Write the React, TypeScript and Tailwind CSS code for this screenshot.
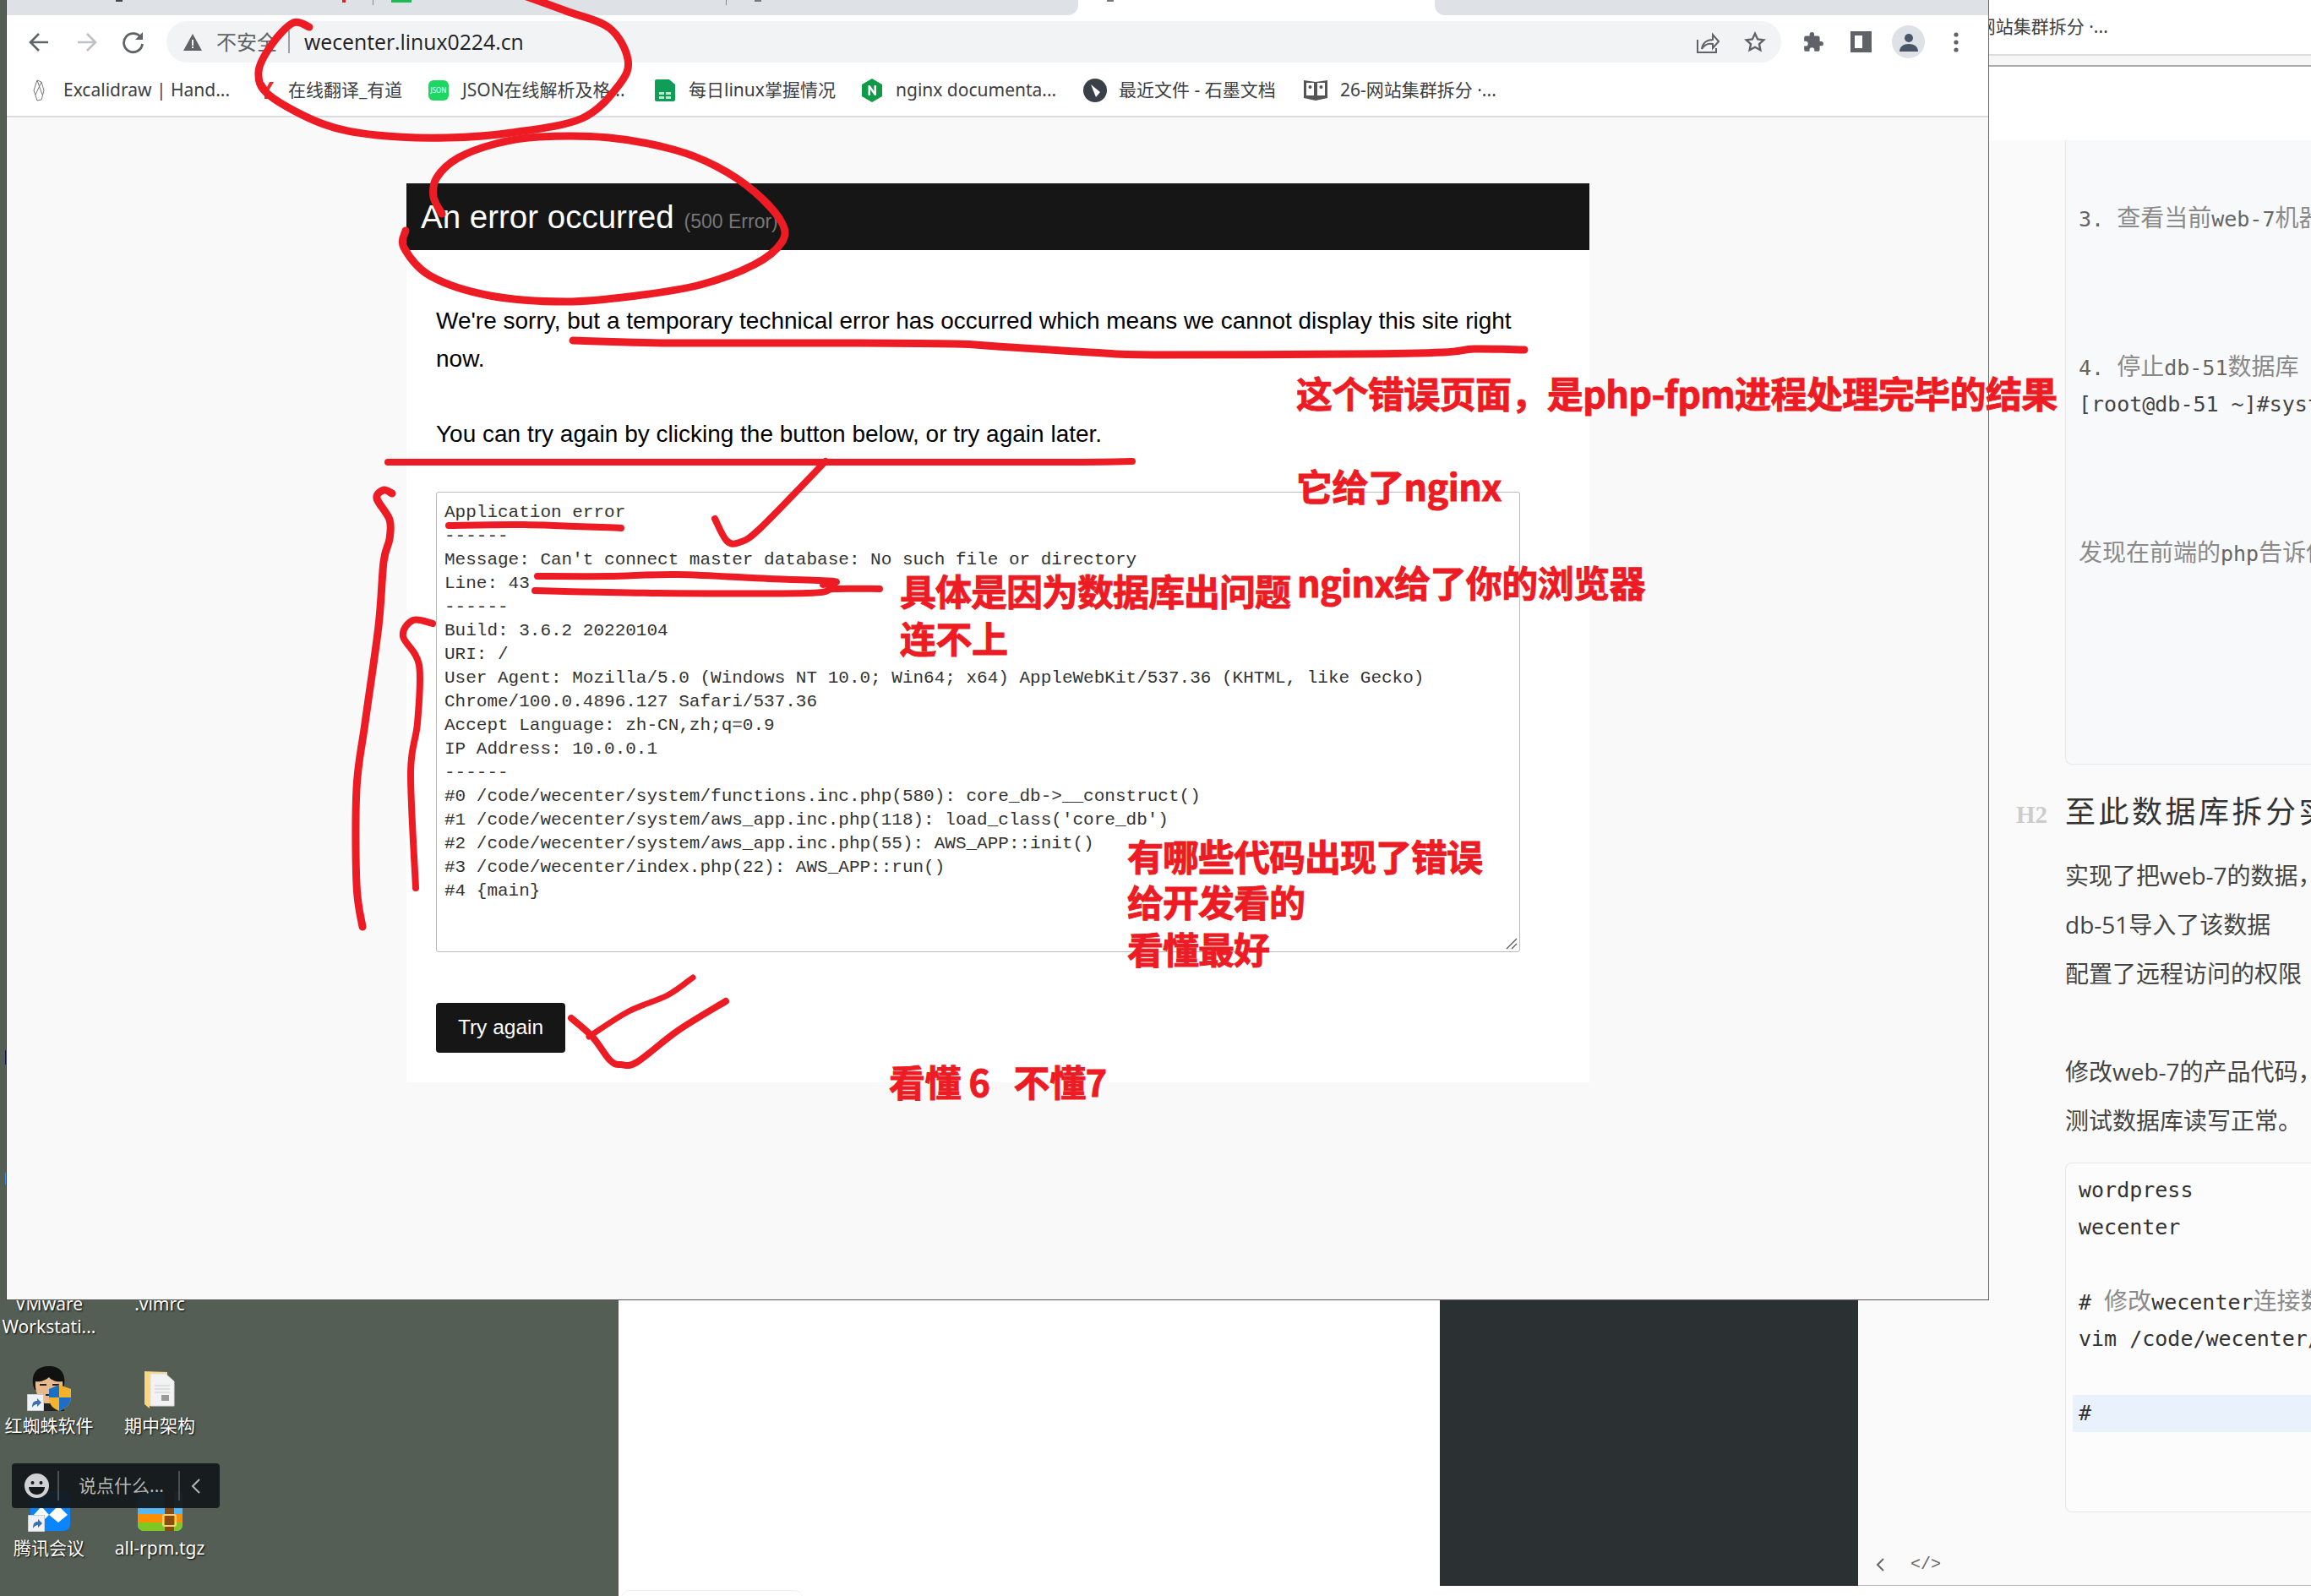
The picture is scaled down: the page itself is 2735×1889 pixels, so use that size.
import React from "react";

const SANS = "font-['Noto_Sans','Noto_Sans_CJK_SC',sans-serif]";

type P = [number, number];
function smooth(p: P[]) {
  let d = `M${p[0][0]} ${p[0][1]}`;
  for (let i = 0; i < p.length - 1; i++) {
    const a = p[Math.max(i - 1, 0)], b = p[i], c = p[i + 1], e = p[Math.min(i + 2, p.length - 1)];
    const c1x = b[0] + (c[0] - a[0]) / 6, c1y = b[1] + (c[1] - a[1]) / 6;
    const c2x = c[0] - (e[0] - b[0]) / 6, c2y = c[1] - (e[1] - b[1]) / 6;
    d += ` C${c1x} ${c1y} ${c2x} ${c2y} ${c[0]} ${c[1]}`;
  }
  return d;
}

const strokes: { p: P[]; w: number }[] = [
  { w: 9, p: [[366, 32], [347, 27], [322, 52], [306, 85], [319, 113], [383, 147], [446, 160], [529, 163], [606, 157], [689, 140], [733, 100], [743, 70], [721, 33], [670, 13], [612, -8]] },
  { w: 9, p: [[523, 253], [513, 233], [517, 210], [542, 187], [587, 170], [638, 162], [721, 163], [797, 177], [848, 197], [893, 227], [925, 263], [925, 287], [893, 313], [829, 337], [753, 350], [670, 357], [580, 350], [510, 327], [478, 293], [480, 273]] },
  { w: 9, p: [[678, 403], [800, 406], [1000, 406], [1130, 407], [1180, 410], [1290, 417], [1365, 420], [1600, 419], [1708, 417], [1745, 413], [1804, 414]] },
  { w: 8, p: [[459, 547], [800, 547], [1240, 547], [1340, 546]] },
  { w: 8, p: [[846, 614], [860, 640], [875, 642], [900, 625], [977, 546]] },
  { w: 9, p: [[464, 584], [454, 580], [446, 590], [461, 615], [461, 638], [454, 665], [448, 741], [432, 856], [422, 933], [422, 1047], [429, 1097]] },
  { w: 8, p: [[512, 738], [489, 734], [477, 753], [496, 787], [494, 856], [486, 914], [492, 1051]] },
  { w: 8, p: [[531, 622], [620, 621], [735, 625]] },
  { w: 8, p: [[636, 682], [720, 682], [802, 680], [910, 685], [987, 688], [974, 692]] },
  { w: 8, p: [[633, 699], [780, 702], [955, 702], [987, 697], [1041, 697]] },
  { w: 8, p: [[676, 1205], [701, 1227], [722, 1255], [735, 1260], [754, 1257], [802, 1220], [859, 1185]] },
  { w: 7, p: [[697, 1227], [744, 1197], [790, 1178], [820, 1157]] },
];

const Notes = () => (
  <div className="absolute left-0 top-0 w-[2735px] h-[1889px] pointer-events-none font-['Noto_Sans_CJK_SC','Noto_Sans',sans-serif] font-bold text-[#ed1c24] text-[43px] leading-[50px] whitespace-pre tracking-[-0.5px] [-webkit-text-stroke:1px_#ed1c24]">
    <svg className="absolute left-0 top-0" width="2735" height="1889" viewBox="0 0 2735 1889" fill="none">
      {strokes.map((s, i) => (
        <path key={i} d={smooth(s.p)} stroke="#ed1c24" strokeWidth={s.w} strokeLinecap="round" strokeLinejoin="round" />
      ))}
    </svg>
    <div className="absolute left-[1534px] top-[439px] tracking-[-0.6px]">这个错误页面，是php-fpm进程处理完毕的结果</div>
    <div className="absolute left-[1534px] top-[549px]">它给了nginx</div>
    <div className="absolute left-[1065px] top-[673px] tracking-[-1px]">具体是因为数据库出问题</div>
    <div className="absolute left-[1535px] top-[663px] tracking-[-0.6px]">nginx给了你的浏览器</div>
    <div className="absolute left-[1065px] top-[729px]">连不上</div>
    <div className="absolute left-[1334px] top-[987px] tracking-[-1px]">有哪些代码出现了错误</div>
    <div className="absolute left-[1334px] top-[1041px] tracking-[-1px]">给开发看的</div>
    <div className="absolute left-[1334px] top-[1097px] tracking-[-1px]">看懂最好</div>
    <div className="absolute left-[1052px] top-[1254px] tracking-[-0.4px]">看懂 6   不懂7</div>
  </div>
);

const Toolbar = () => (
  <div className="h-[62px] bg-white flex items-start pt-[7px]">
    <div className="w-[189px] h-[49px] relative shrink-0 flex items-center">
      <svg className="ml-[24px]" width="28" height="28" viewBox="0 0 28 28" fill="none" stroke="#5f6368" strokeWidth="2.6"><path d="M25 14H4M14 4L4 14l10 10" /></svg>
      <svg className="ml-[29px]" width="28" height="28" viewBox="0 0 28 28" fill="none" stroke="#bdc1c6" strokeWidth="2.6"><path d="M3 14h21M14 4l10 10-10 10" /></svg>
      <svg className="ml-[27px]" width="28" height="28" viewBox="0 0 28 28" fill="none" stroke="#5f6368" strokeWidth="2.8"><path d="M23 9a11 11 0 1 0 1.5 7" /><path d="M25 2v9h-9z" fill="#5f6368" stroke="none" /></svg>
    </div>
    <div className="w-[1911px] h-[49px] bg-[#f1f3f4] rounded-full shrink-0 flex items-center pl-[20px]">
      <svg width="22" height="20" viewBox="0 0 22 20"><path d="M11 0l11 20H0z" fill="#5f6368" /><path d="M10 7h2v7h-2zM10 15h2v2h-2z" fill="#f1f3f4" /></svg>
      <span className="ml-[17px] text-[24px] text-[#5f6368]">不安全</span>
      <span className="ml-[13px] w-[2px] h-[27px] bg-[#9aa0a6]" />
      <span className="ml-[17px] text-[24.8px] text-[#202124] font-['Open_Sans','Noto_Sans',sans-serif]">wecenter.linux0224.cn</span>
      <svg className="ml-auto" width="28" height="26" viewBox="0 0 28 26" fill="none" stroke="#5f6368" strokeWidth="2"><path d="M2 10v15h22v-5" /><path d="M7 21c1-7 6-11 13-11V4l7 8-7 8v-5c-5-1-10 1-13 6z" /></svg>
      <svg className="ml-[29px] mr-[18px]" width="26" height="26" viewBox="0 0 24 24" fill="none" stroke="#5f6368" strokeWidth="2.2"><path d="M12 2.5l2.9 6.2 6.6.8-4.9 4.5 1.3 6.6-5.9-3.3-5.9 3.3 1.3-6.6L2.5 9.5l6.6-.8z" /></svg>
    </div>
    <div className="flex items-center h-[49px] flex-1">
      <svg className="ml-[25px]" width="26" height="26" viewBox="0 0 24 24" fill="#5f6368"><path d="M20.5 11H19V7a2 2 0 0 0-2-2h-4V3.5a2.5 2.5 0 0 0-5 0V5H4a2 2 0 0 0-2 2v3.8h1.5a2.7 2.7 0 0 1 0 5.4H2V20a2 2 0 0 0 2 2h3.8v-1.5a2.7 2.7 0 0 1 5.4 0V22H17a2 2 0 0 0 2-2v-4h1.5a2.5 2.5 0 0 0 0-5z" /></svg>
      <div className="ml-[31px] w-[25px] h-[25px] border-[5px] border-r-[11px] border-[#5f6368] bg-white" />
      <div className="ml-[24px] w-[39px] h-[39px] rounded-full bg-[#dee1e6] flex items-center justify-center">
        <svg width="24" height="24" viewBox="0 0 24 24" fill="#4a5568"><circle cx="12" cy="7" r="5" /><path d="M1 23c0-6 5-9 11-9s11 3 11 9z" /></svg>
      </div>
      <svg className="ml-[34px]" width="6" height="24" viewBox="0 0 6 24" fill="#5f6368"><circle cx="3" cy="3" r="2.6" /><circle cx="3" cy="12" r="2.6" /><circle cx="3" cy="21" r="2.6" /></svg>
    </div>
  </div>
);

const Bookmark = ({ w, icon, text }: { w: string; icon: React.ReactNode; text: string }) => (
  <div className={`flex items-center shrink-0 ${w}`}>
    <div className="w-[36px] h-[30px] shrink-0 flex items-center">{icon}</div>
    <span className="text-[21px] text-[#3c4043] whitespace-nowrap">{text}</span>
  </div>
);

const Bookmarks = () => (
  <div className="h-[57px] pb-[3px] bg-white flex items-center pl-[31px]">
    <Bookmark w="w-[266px]" text="Excalidraw | Hand..." icon={
      <svg width="14" height="26" viewBox="0 0 14 26" fill="none" stroke="#777" strokeWidth="1"><path d="M5 1l5 2 3 10-3 11-5 1-4-12zM5 1l6 17M10 3L3 18" /></svg>} />
    <Bookmark w="w-[206px]" text="在线翻译_有道" icon={
      <svg width="20" height="24" viewBox="0 0 20 24" fill="#ed2b2b"><path d="M2 2h5l4 6 3-6h5l-7 12v8H8v-8z" /></svg>} />
    <Bookmark w="w-[268px]" text="JSON在线解析及格..." icon={
      <div className="-ml-[4px] w-[24px] h-[24px] rounded-[6px] bg-[#1ed760] flex items-center justify-center text-[8px] text-white">JSON</div>} />
    <Bookmark w="w-[245px]" text="每日linux掌握情况" icon={
      <svg className="-ml-[4px]" width="24" height="26" viewBox="0 0 24 26"><path d="M2 0h15l7 6v18a2 2 0 0 1-2 2H2a2 2 0 0 1-2-2V2a2 2 0 0 1 2-2z" fill="#0f9d58" /><path d="M5 15h6v3H5zM13 15h6v3h-6zM5 20h6v3H5zM13 20h6v3h-6z" fill="#bfe8d0" /></svg>} />
    <Bookmark w="w-[264px]" text="nginx documenta..." icon={
      <svg className="-ml-[4px]" width="24" height="28" viewBox="0 0 24 28"><path d="M12 0l12 7v14l-12 7-12-7V7z" fill="#0f9a47" /><path d="M7.5 20V8h2l5 7V8h2.5v12h-2l-5-7v7z" fill="#fff" /></svg>} />
    <Bookmark w="w-[262px]" text="最近文件 - 石墨文档" icon={
      <svg className="-ml-[6px]" width="28" height="28" viewBox="0 0 28 28"><circle cx="14" cy="14" r="14" fill="#3a4047" /><path d="M9 7l11 9-5 6z" fill="#fff" /></svg>} />
    <Bookmark w="w-[230px]" text="26-网站集群拆分 ·..." icon={
      <svg className="-ml-[7px]" width="28" height="26" viewBox="0 0 28 26"><path d="M0 1l14 2 14-2v21l-14 3-14-3z" fill="#555" /><rect x="3" y="4" width="9" height="15" fill="#fff" /><rect x="16" y="4" width="9" height="15" fill="#fff" /><circle cx="7.5" cy="9" r="2" fill="#555" /><circle cx="20.5" cy="9" r="2" fill="#555" /></svg>} />
  </div>
);

const log = `Application error
------
Message: Can't connect master database: No such file or directory
Line: 43
------
Build: 3.6.2 20220104
URI: /
User Agent: Mozilla/5.0 (Windows NT 10.0; Win64; x64) AppleWebKit/537.36 (KHTML, like Gecko)
Chrome/100.0.4896.127 Safari/537.36
Accept Language: zh-CN,zh;q=0.9
IP Address: 10.0.0.1
------
#0 /code/wecenter/system/functions.inc.php(580): core_db->__construct()
#1 /code/wecenter/system/aws_app.inc.php(118): load_class('core_db')
#2 /code/wecenter/system/aws_app.inc.php(55): AWS_APP::init()
#3 /code/wecenter/index.php(22): AWS_APP::run()
#4 {main}`;

const ErrorPage = () => (
  <div className="flex-1 bg-[#f9f9f9] pt-[78px] pl-[473px] font-['Liberation_Sans',sans-serif]">
    <div className="w-[1400px] bg-white">
      <div className="h-[79px] bg-[#161616] pl-[17px] flex items-baseline pt-[16px]">
        <span className="text-[38.5px] leading-[48px] text-white">An error occurred</span>
        <span className="ml-[12px] text-[23px] text-[#777]">(500 Error)</span>
      </div>
      <div className="pl-[35px] pt-[62px] pb-[35px]">
        <p className="text-[28px] leading-[44.7px] text-black w-[1300px]">
          We're sorry, but a temporary technical error has occurred which means we cannot display this site right now.
          <br /><br />
          You can try again by clicking the button below, or try again later.
        </p>
        <div className="relative mt-[45px] w-[1283px] h-[545px] border border-[#bbb] rounded-[3px] pl-[9px] pt-[10px] font-['Liberation_Mono',monospace] text-[21px] leading-[28px] text-[#333] whitespace-pre overflow-hidden">
          {log}
          <svg className="absolute right-[2px] bottom-[2px]" width="14" height="14" viewBox="0 0 14 14" stroke="#555" strokeWidth="1.2"><path d="M13 1L1 13M13 7l-6 6" /></svg>
        </div>
        <div className="mt-[60px] w-[153px] h-[59px] bg-[#161616] rounded-[4px] text-white text-[24.5px] flex items-center justify-center">Try again</div>
      </div>
    </div>
  </div>
);

const Browser = () => (
  <div className={`absolute left-[7px] top-0 w-[2347px] h-[1539px] bg-white flex flex-col border-l border-r border-b border-l-[#3a3f3a] border-r-[#666] border-b-[#555] ${SANS}`}>
    <div className="relative h-[18px] flex shrink-0">
      <div className="w-[1268px] bg-[#dee1e6] rounded-br-[12px]" />
      <div className="w-[422px] bg-white" />
      <div className="flex-1 bg-[#dee1e6] rounded-bl-[12px]" />
      <div className="absolute left-[129px] top-0 w-[8px] h-[2px] bg-[#444]" />
      <div className="absolute left-[397px] top-0 w-[4px] h-[3px] bg-[#e02020]" />
      <div className="absolute left-[433px] top-0 w-[1px] h-[6px] bg-[#888]" />
      <div className="absolute left-[455px] top-0 w-[24px] h-[3px] bg-[#1db954]" />
      <div className="absolute left-[851px] top-0 w-[1px] h-[6px] bg-[#888]" />
      <div className="absolute left-[885px] top-0 w-[8px] h-[2px] bg-[#777]" />
      <div className="absolute left-[1302px] top-0 w-[8px] h-[2px] bg-[#777]" />
    </div>
    <Toolbar />
    <Bookmarks />
    <div className="h-[2px] bg-[#dadce0] shrink-0" />
    <ErrorPage />
  </div>
);

const Label = ({ children }: { children: React.ReactNode }) => (
  <div className="text-center text-white text-[21px] leading-[27px] [text-shadow:1px_1px_2px_#000] whitespace-pre">{children}</div>
);

const Shortcut = () => (
  <svg className="absolute left-0 bottom-0" width="20" height="20" viewBox="0 0 20 20"><rect width="20" height="20" fill="#eef1f5" stroke="#aaa" /><path d="M6 16c0-6 2-8 6-8V5l5 5-5 5v-3c-2 0-4 1-6 4z" fill="#3a6fb0" /></svg>
);

const Desktop = () => (
  <aside className={`w-[732px] h-[1889px] shrink-0 bg-[#545e54] pt-[1530px] ${SANS}`}>
    <div className="grid grid-cols-[116px_146px] grid-rows-[87px_148px_auto]">
      <Label>{"VMware\nWorkstati..."}</Label>
      <Label>.vimrc</Label>
      <div className="flex flex-col items-center">
        <div className="relative w-[52px] h-[53px]">
          <svg width="52" height="53" viewBox="0 0 52 53">
            <path d="M7 22C5 6 14 0 26 0s20 7 18 22l-2 6H9z" fill="#111" />
            <path d="M10 18c5 1 12-1 16-5 3 4 9 6 16 5 1 12-3 25-16 27C14 44 9 30 10 18z" fill="#e9b98c" />
            <path d="M15 22h8M30 22h8M22 34h10" stroke="#222" strokeWidth="2" />
            <path d="M8 53c1-7 8-9 18-9s18 2 18 9z" fill="#222" />
            <path d="M38 22l14 5v10c0 8-6 13-14 16-8-3-12-8-12-16V27z" fill="#f5b32c" />
            <path d="M38 22v15H26v-10zM38 37h14c0 8-6 13-14 16z" fill="#1c6fc4" />
          </svg>
          <Shortcut />
        </div>
        <div className="mt-[4px]"><Label>红蜘蛛软件</Label></div>
      </div>
      <div className="flex flex-col items-center">
        <svg className="mt-[5px]" width="36" height="45" viewBox="0 0 36 45">
          <path d="M0 1l27 1v40H6l0 3-6-5z" fill="#f8d77e" />
          <path d="M7 4h18l10 9v29H7z" fill="#f2f2f2" stroke="#ddd" />
          <path d="M12 18h18M12 22h18M12 26h18" stroke="#ccc" />
          <rect x="20" y="29" width="9" height="7" fill="#999" />
        </svg>
        <div className="mt-[7px]"><Label>期中架构</Label></div>
      </div>
      <div className="flex flex-col items-center">
        <div className="relative w-[50px] h-[48px]">
          <svg className="absolute right-0 top-0" width="47" height="47" viewBox="0 0 47 47">
            <rect width="47" height="47" rx="8" fill="#0a84ff" />
            <path d="M4 28l9-10 9 10 11-11 11 11-11 9-11-9-9 9z" fill="#fff" />
          </svg>
          <Shortcut />
        </div>
        <div className="mt-[6px]"><Label>腾讯会议</Label></div>
      </div>
      <div className="flex flex-col items-center">
        <svg width="53" height="47" viewBox="0 0 53 47">
          <rect width="53" height="47" rx="7" fill="#54b8f5" />
          <path d="M0 27h53v10H0z" fill="#ff8f00" />
          <path d="M0 37h53v3a7 7 0 0 1-7 7H7a7 7 0 0 1-7-7z" fill="#7fc823" />
          <rect x="32" y="0" width="11" height="47" fill="#8a4b10" />
          <rect x="30" y="28" width="15" height="13" fill="none" stroke="#ffd27a" strokeWidth="2" rx="2" />
        </svg>
        <div className="mt-[7px]"><Label>all-rpm.tgz</Label></div>
      </div>
    </div>
  </aside>
);

const ChatBar = () => (
  <div className={`absolute left-[14px] top-[1732px] w-[246px] h-[53px] bg-[#14191c]/95 rounded-[4px] flex items-center ${SANS}`}>
    <svg className="ml-[15px]" width="29" height="29" viewBox="0 0 29 29"><circle cx="14.5" cy="14.5" r="14.5" fill="#cfd1d2" /><circle cx="9.5" cy="11" r="2" fill="#14191c" /><circle cx="19.5" cy="11" r="2" fill="#14191c" /><path d="M5 16h19c0 5-4 9-9.5 9S5 21 5 16z" fill="#14191c" /></svg>
    <span className="ml-[10px] w-[2px] h-[35px] bg-[#4a4f52]" />
    <span className="ml-[23px] w-[118px] text-[21px] text-[#b4b6b7] whitespace-nowrap">说点什么...</span>
    <span className="w-[2px] h-[35px] bg-[#4a4f52]" />
    <svg className="ml-[13px]" width="12" height="20" viewBox="0 0 12 20" fill="none" stroke="#b4b6b7" strokeWidth="2"><path d="M10 2L2 10l8 8" /></svg>
  </div>
);

const editorMono = "font-['DejaVu_Sans_Mono','Noto_Sans_CJK_SC',monospace]";

const Zh = ({ children }: { children: React.ReactNode }) => (
  <span className="text-[28px] text-[#8a8a8a]">{children}</span>
);

const Editor = () => (
  <div className={`flex-1 min-w-0 h-[1877px] flex flex-col bg-white overflow-hidden ${SANS}`}>
    <div className="h-[166px] shrink-0 flex flex-col">
      <div className="h-[66px] pl-[111px] border-b-2 border-[#ddd] flex items-center text-[21px] text-[#3c4043] whitespace-nowrap">26-网站集群拆分 ·...</div>
      <div className="h-[13px] bg-[#f6f6f6] border-b-2 border-b-[#aaa]" />
    </div>
    <div className="flex-1 bg-[#fafafa] pl-[245px] min-h-0">
      <div className={`w-[400px] h-[739px] bg-[#f8f9fa] border-l border-b border-[#e8e8e8] rounded-bl-[8px] pl-[15px] pt-[71px] text-[25px] leading-[44px] whitespace-pre text-[#666] overflow-hidden ${editorMono}`}>
        <div className="h-[44px]">3. <Zh>查看当前</Zh>web-7<Zh>机器</Zh></div>
        <div className="h-[132px]" />
        <div className="h-[44px]">4. <Zh>停止</Zh>db-51<Zh>数据库</Zh></div>
        <div className="h-[44px] text-[#444]">[root@db-51 ~]#systemctl</div>
        <div className="h-[132px]" />
        <div className="h-[44px]"><Zh>发现在前端的</Zh>php<Zh>告诉你</Zh></div>
      </div>
      <div className="relative mt-[36px] text-[36px] leading-[40px] tracking-[3.5px] text-[#333] whitespace-nowrap">
        <span className="absolute -left-[58px] top-[3px] font-['Liberation_Serif',serif] font-bold text-[29px] tracking-normal text-[#ccc]">H2</span>
        至此数据库拆分实
      </div>
      <div className="mt-[26px] text-[28px] leading-[58px] text-[#444] whitespace-nowrap font-['Open_Sans','Noto_Sans_CJK_SC',sans-serif]">
        <div>实现了把web-7的数据，</div>
        <div>db-51导入了该数据</div>
        <div>配置了远程访问的权限</div>
        <div className="h-[58px]" />
        <div>修改web-7的产品代码，</div>
        <div>测试数据库读写正常。</div>
      </div>
      <div className={`mt-[21px] w-[400px] h-[414px] bg-[#fcfcfc] border border-r-0 border-[#e6e6e6] rounded-l-[8px] pt-[10px] pl-[8px] text-[25px] leading-[44px] text-[#333] whitespace-pre overflow-hidden ${editorMono}`}>
        <div className="pl-[7px] h-[44px]">wordpress</div>
        <div className="pl-[7px] h-[44px]">wecenter</div>
        <div className="h-[44px]" />
        <div className="pl-[7px] h-[44px]"># <Zh>修改</Zh>wecenter<Zh>连接数据库</Zh></div>
        <div className="pl-[7px] h-[44px]">vim /code/wecenter/system</div>
        <div className="h-[44px]" />
        <div className="pl-[7px] h-[44px] bg-[#e8f1fc]">#</div>
      </div>
    </div>
    <div className="h-[54px] shrink-0 bg-[#fafafa] border-b border-[#bbb] flex items-center pl-[20px] pt-[5px] text-[#666]">
      <svg width="12" height="18" viewBox="0 0 12 18" fill="none" stroke="#666" strokeWidth="2"><path d="M10 2L3 9l7 7" /></svg>
      <span className="ml-[30px] text-[20px] font-['Liberation_Mono',monospace]">&lt;/&gt;</span>
    </div>
  </div>
);

export default function App() {
  return (
    <div className="relative w-[2735px] h-[1889px] overflow-hidden bg-white flex items-start">
      <Desktop />
      <div className="w-[972px] h-[1889px] shrink-0 bg-white" />
      <div className="w-[495px] h-[1877px] shrink-0 bg-[#2b3033]" />
      <Editor />
      <div className="absolute left-[735px] top-[1882px] w-[215px] h-[20px] rounded-[10px] border border-[#eeeeee]" />
      <div className="absolute left-[6px] top-[1243px] w-[2px] h-[17px] bg-[#101a55]" />
      <div className="absolute left-[6px] top-[1388px] w-[2px] h-[14px] bg-[#3d8fe0]" />
      <Browser />
      <ChatBar />
      <Notes />
    </div>
  );
}
